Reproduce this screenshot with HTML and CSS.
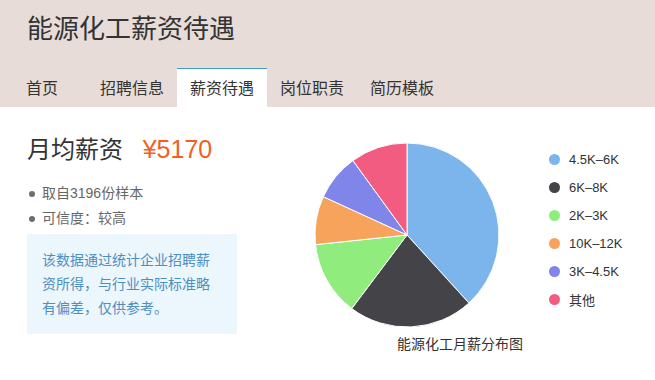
FILE: index.html
```html
<!doctype html>
<html lang="zh">
<head>
<meta charset="UTF-8">
<title>能源化工薪资待遇</title>
<link rel="stylesheet" href="styles.css">
</head>
<body>
<header class="top">
  <h1>能源化工薪资待遇</h1>
  <nav class="tabs">
    <a class="tab first">首页</a>
    <a class="tab">招聘信息</a>
    <a class="tab active">薪资待遇</a>
    <a class="tab">岗位职责</a>
    <a class="tab">简历模板</a>
  </nav>
</header>

<main class="salary">
  <section class="summary">
    <h2>月均薪资 <span class="money">¥5170</span></h2>
    <ul class="facts">
      <li>取自3196份样本</li>
      <li>可信度：较高</li>
    </ul>
    <p class="note">该数据通过统计企业招聘薪资所得，与行业实际标准略有偏差，仅供参考。</p>
  </section>

  <section class="chart">
    <svg class="pie" width="200" height="200" viewBox="0 0 200 200">
      <g stroke="#fff" stroke-width="1" stroke-linejoin="round">
        <path fill="#7cb5ec" d="M100,100 L100,8 A92,92 0 0 1 161.92,168.04 Z"/>
        <path fill="#434348" d="M100,100 L161.92,168.04 A92,92 0 0 1 44.76,173.57 Z"/>
        <path fill="#90ed7d" d="M100,100 L44.76,173.57 A92,92 0 0 1 8.5,109.62 Z"/>
        <path fill="#f7a35c" d="M100,100 L8.5,109.62 A92,92 0 0 1 16.35,61.7 Z"/>
        <path fill="#8085e9" d="M100,100 L16.35,61.7 A92,92 0 0 1 45.92,25.57 Z"/>
        <path fill="#f15c80" d="M100,100 L45.92,25.57 A92,92 0 0 1 100,8 Z"/>
      </g>
    </svg>
    <ul class="legend">
      <li><i style="background:#7cb5ec"></i>4.5K–6K</li>
      <li><i style="background:#434348"></i>6K–8K</li>
      <li><i style="background:#90ed7d"></i>2K–3K</li>
      <li><i style="background:#f7a35c"></i>10K–12K</li>
      <li><i style="background:#8085e9"></i>3K–4.5K</li>
      <li><i style="background:#f15c80"></i>其他</li>
    </ul>
    <div class="caption">能源化工月薪分布图</div>
  </section>
</main>
</body>
</html>
```

FILE: styles.css
```css
body {
  margin: 0;
  font-family: "Liberation Sans", "Noto Sans CJK SC", sans-serif;
  color: #333;
  background: #fff;
}
.top {
  background: #e7dcd8;
  height: 107px;
  display: flex;
  flex-direction: column;
}
.top h1 {
  margin: 0;
  padding: 14px 0 0 27px;
  font-size: 26px;
  font-weight: normal;
  line-height: 30px;
  color: #333;
}
.tabs {
  display: flex;
  margin-top: 24px;
  padding-left: 13px;
}
.tab {
  height: 38px;
  line-height: 40px;
  padding: 0 13px;
  font-size: 16px;
  color: #333;
  border-top: 1px solid transparent;
}
.tab.first {
  margin-right: 16px;
}
.tab.active {
  background: #fff;
  border-top-color: #3f9fc0;
}

.salary {
  display: flex;
  padding: 0 0 0 27px;
}
.summary {
  width: 210px;
}
.summary h2 {
  margin: 0;
  padding-top: 27px;
  font-size: 24px;
  font-weight: normal;
  line-height: 30px;
}
.money {
  margin-left: 13px;
  font-size: 25px;
  color: #f2601d;
}
.facts {
  list-style: none;
  margin: 16px 0 0;
  padding: 0;
  font-size: 14px;
  color: #666;
}
.facts li {
  line-height: 25px;
  display: flex;
  align-items: center;
}
.facts li::before {
  content: "";
  width: 6px;
  height: 6px;
  border-radius: 50%;
  background: #6e6e6e;
  margin: 0 7px 0 2px;
}
.note {
  margin: 3px 0 0;
  padding: 14px 15px 14px;
  background: #ebf6fd;
  color: #4d8fc1;
  font-size: 14px;
  line-height: 24px;
}

.chart {
  display: grid;
  grid-template-columns: 200px auto;
  grid-template-rows: auto auto;
  column-gap: 42px;
  margin-left: 70px;
  padding-top: 28px;
}
.legend {
  list-style: none;
  margin: 10px 0 0;
  padding: 0;
  font-size: 13px;
}
.legend li {
  display: flex;
  align-items: center;
  height: 28px;
}
.legend i {
  width: 11px;
  height: 11px;
  border-radius: 50%;
  margin-right: 9px;
}
.caption {
  grid-column: 1 / 3;
  margin: -1px 0 0 90px;
  font-size: 14px;
  line-height: 20px;
}
```
